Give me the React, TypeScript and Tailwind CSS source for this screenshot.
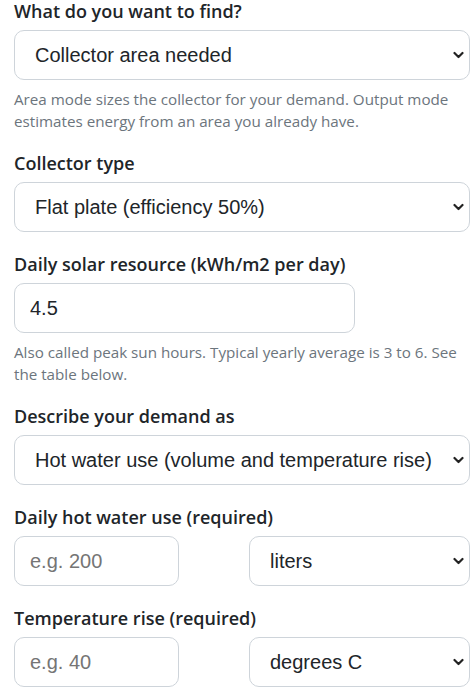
import type { ReactNode } from "react";

const labelCls = "block text-[18px] leading-[22px] font-semibold text-[#212529] mb-2";
const helpCls = "mt-2 -mb-px text-[15.2px] leading-[22px] text-[#6c757d]";
const boxCls =
  "h-[50px] rounded-[10px] border border-[#ced4da] bg-white text-[20px] text-[#212529] outline-none";

function Chevron() {
  return (
    <svg
      className="pointer-events-none absolute right-[6px] top-1/2 -translate-y-1/2"
      width="11"
      height="8"
      viewBox="0 0 11 8"
      fill="none"
      stroke="#222"
      strokeWidth="2.2"
      strokeLinecap="round"
      strokeLinejoin="round"
    >
      <path d="M1.5 2 L5.5 6 L9.5 2" />
    </svg>
  );
}

function Select({ value, className }: { value: string; className?: string }) {
  return (
    <div className={"relative " + (className ?? "")}>
      <select
        defaultValue={value}
        className={boxCls + " w-full appearance-none pl-[20px] pr-8"}
        style={{ fontFamily: '"Liberation Sans", Arial, sans-serif' }}
      >
        <option>{value}</option>
      </select>
      <Chevron />
    </div>
  );
}

function Input({ value, placeholder, className }: { value?: string; placeholder?: string; className?: string }) {
  return (
    <input
      defaultValue={value}
      placeholder={placeholder}
      className={boxCls + " px-[15px] placeholder:text-[#757575] " + (className ?? "")}
      style={{ fontFamily: '"Liberation Sans", Arial, sans-serif' }}
    />
  );
}

function Field({ label, help, children }: { label: string; help?: string; children: ReactNode }) {
  return (
    <div>
      <label className={labelCls}>{label}</label>
      {children}
      {help && <p className={helpCls}>{help}</p>}
    </div>
  );
}

export default function App() {
  return (
    <div
      className="flex w-[472px] flex-col gap-[21px] bg-white pl-[14px] pr-[2px]"
      style={{ fontFamily: '"Open Sans", "Noto Sans", sans-serif' }}
    >
      <Field
        label="What do you want to find?"
        help="Area mode sizes the collector for your demand. Output mode estimates energy from an area you already have."
      >
        <Select value="Collector area needed" />
      </Field>

      <Field label="Collector type">
        <Select value="Flat plate (efficiency 50%)" />
      </Field>

      <Field
        label="Daily solar resource (kWh/m2 per day)"
        help="Also called peak sun hours. Typical yearly average is 3 to 6. See the table below."
      >
        <Input value="4.5" className="w-[341px]" />
      </Field>

      <Field label="Describe your demand as">
        <Select value="Hot water use (volume and temperature rise)" />
      </Field>

      <Field label="Daily hot water use (required)">
        <div className="flex items-start justify-between">
          <Input placeholder="e.g. 200" className="w-[165px]" />
          <Select value="liters" className="w-[221px]" />
        </div>
      </Field>

      <Field label="Temperature rise (required)">
        <div className="flex items-start justify-between">
          <Input placeholder="e.g. 40" className="w-[165px]" />
          <Select value="degrees C" className="w-[221px]" />
        </div>
      </Field>
    </div>
  );
}
